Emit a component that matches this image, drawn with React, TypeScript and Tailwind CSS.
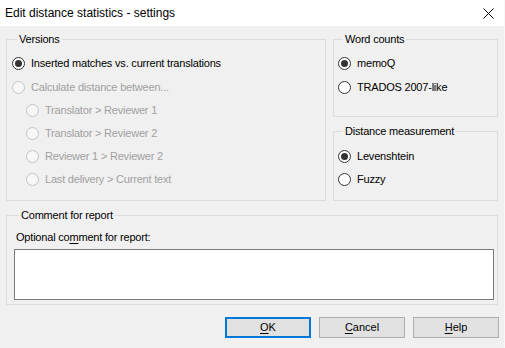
import React from 'react';

const font = { fontFamily: '"Liberation Sans", Arial, sans-serif' };

type RadioProps = { label: React.ReactNode; checked?: boolean; disabled?: boolean; indent?: boolean; first?: boolean };

const Radio: React.FC<RadioProps> = ({ label, checked, disabled, indent, first }) => (
    <div className={`flex items-center h-[23px] ${indent ? 'pl-[14px]' : ''} ${first ? 'mb-[1px]' : ''}`}>
        <span
            className={`w-[13px] h-[13px] rounded-full border flex items-center justify-center shrink-0 ${
                disabled ? 'border-[#c4c4c4] bg-[#f7f7f7]' : 'border-[#333333] bg-white'
            }`}
        >
            {checked && <span className="w-[7px] h-[7px] rounded-full bg-[#333333]" />}
        </span>
        <span className={`ml-[6px] text-[11px] tracking-[-0.2px] ${disabled ? 'text-[#a0a0a0]' : 'text-black'}`}>{label}</span>
    </div>
);

const Group: React.FC<{ title: string; className?: string; children: React.ReactNode }> = ({ title, className, children }) => (
    <fieldset className={`border border-[#dcdcdc] m-0 ${className ?? ''}`}>
        <legend className="ml-[5px] px-[2px] text-[11px] tracking-[-0.2px] leading-[14px] text-black">{title}</legend>
        {children}
    </fieldset>
);

const Btn: React.FC<{ k: string; rest: string; primary?: boolean }> = ({ k, rest, primary }) => (
    <button
        className={`w-[86px] h-[21px] text-[11px] text-black bg-[#e1e1e1] ${
            primary ? 'border-2 border-[#0078d7]' : 'border border-[#adadad]'
        }`}
    >
        <span className="underline underline-offset-2">{k}</span>
        {rest}
    </button>
);

export default function App() {
    return (
        <div style={font} className="w-[505px] h-[348px] bg-[#f0f0f0] flex flex-col border-r border-[#f8f8f8]">
            {/* Title bar */}
            <div className="h-[26px] bg-white flex items-center justify-between pl-[5px] pr-[10px] shrink-0">
                <span className="text-[12px] text-black">Edit distance statistics - settings</span>
                <svg width="11" height="11" viewBox="0 0 11 11">
                    <path d="M0.5 0.5 L10.5 10.5 M10.5 0.5 L0.5 10.5" stroke="#000" strokeWidth="1" />
                </svg>
            </div>

            <div className="flex-1 flex flex-col pl-[6px] pr-[6px] pt-[6px]">
                <div className="flex gap-[7px]">
                    <Group title="Versions" className="w-[320px] h-[169px] pl-[5px] pt-[6px]">
                        <Radio label="Inserted matches vs. current translations" checked first />
                        <Radio label="Calculate distance between..." disabled />
                        <Radio label="Translator > Reviewer 1" disabled indent />
                        <Radio label="Translator > Reviewer 2" disabled indent />
                        <Radio label="Reviewer 1 > Reviewer 2" disabled indent />
                        <Radio label="Last delivery > Current text" disabled indent />
                    </Group>
                    <div className="flex-1 flex flex-col gap-[7px]">
                        <Group title="Word counts" className="h-[85px] pl-[4px] pt-[6px]">
                            <Radio label="memoQ" checked first />
                            <Radio label="TRADOS 2007-like" />
                        </Group>
                        <Group title="Distance measurement" className="h-[77px] pl-[4px] pt-[7px]">
                            <Radio label="Levenshtein" checked />
                            <Radio label="Fuzzy" />
                        </Group>
                    </div>
                </div>

                <Group title="Comment for report" className="mt-[7px] h-[97px] pl-[7px] pr-[3px]">
                    <div className="text-[11px] tracking-[-0.2px] text-black pl-[2px] pt-[8px] leading-[14px]">
                        Optional co<span className="underline underline-offset-2">m</span>ment for report:
                    </div>
                    <textarea className="mt-[5px] w-full h-[51px] bg-white border border-[#7a7a7a] resize-none outline-none block" />
                </Group>

                <div className="flex justify-end gap-[8px] mt-[12px] mr-[-1px]">
                    <Btn k="O" rest="K" primary />
                    <Btn k="C" rest="ancel" />
                    <Btn k="H" rest="elp" />
                </div>
            </div>
        </div>
    );
}
